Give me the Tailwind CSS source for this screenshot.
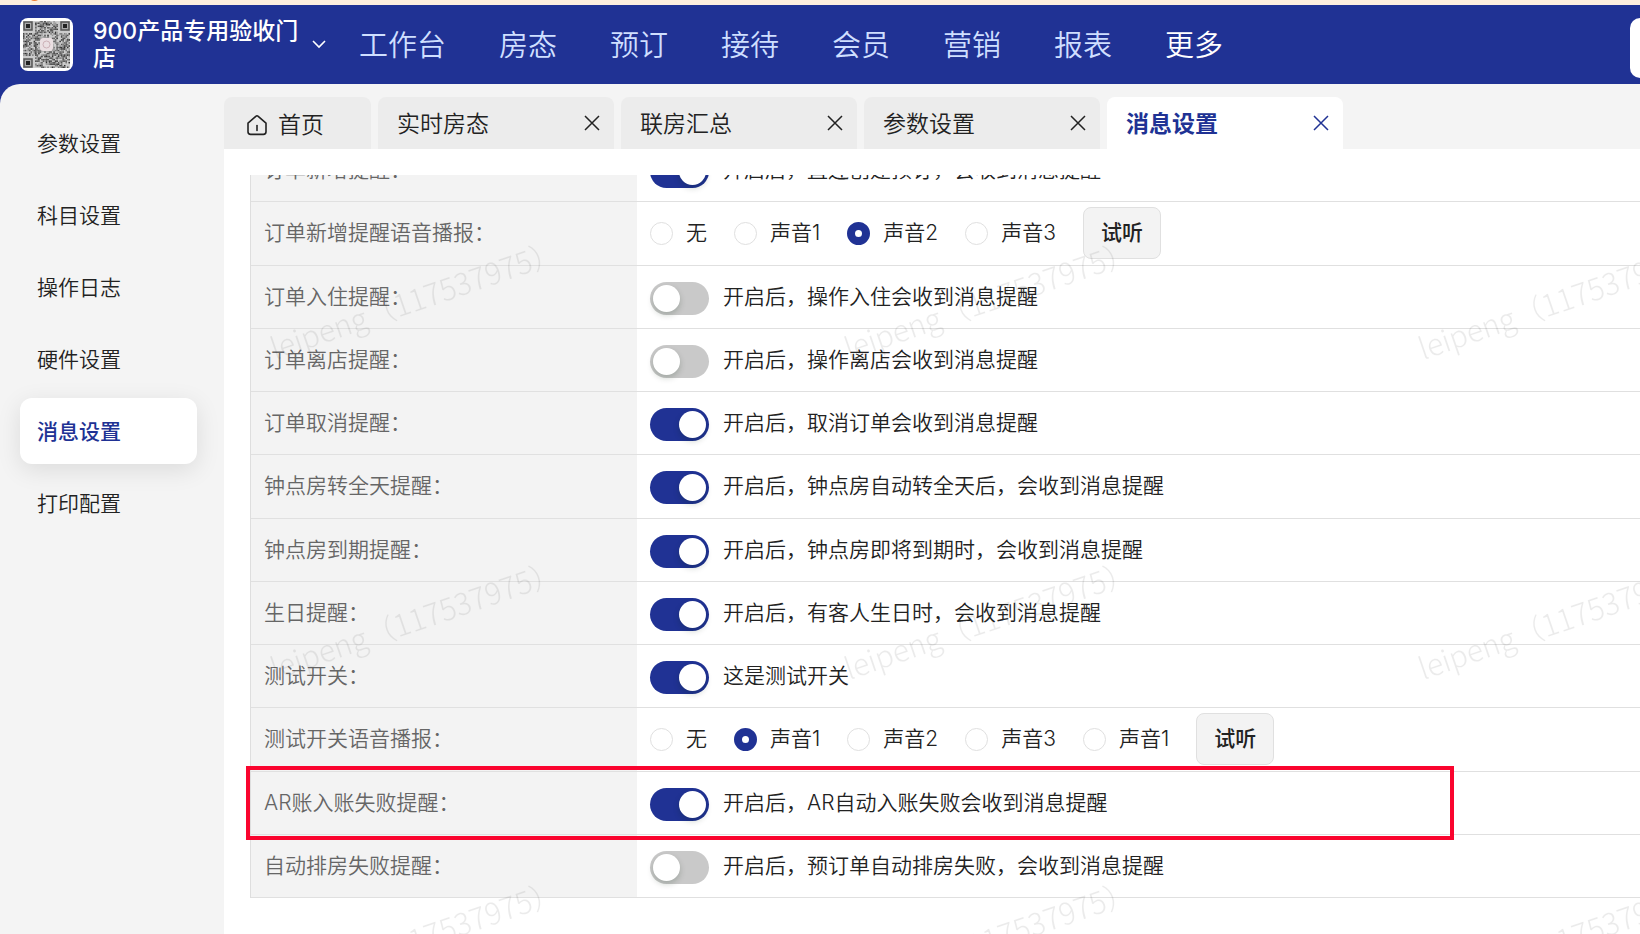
<!DOCTYPE html>
<html lang="zh-CN">
<head>
  <meta charset="UTF-8">
  <meta name="viewport" content="width=device-width, initial-scale=1.0">
  <title>消息设置</title>
  <script src="https://cdn.jsdelivr.net/npm/@tailwindcss/browser@4"></script>
</head>
<body class="flex h-screen flex-col overflow-hidden bg-[#203294] font-[Inter,'Noto_Sans_CJK_SC',sans-serif] text-[21px] leading-[30px] font-[350] text-[#222]">
  <div class="h-[5px] shrink-0 overflow-hidden bg-[#fdefdf] pl-7">
    <div class="-mt-3 h-[13px] w-[13px] rounded-full bg-[#ee7b30]"></div>
  </div>

  <header class="flex h-[79px] shrink-0 items-center pl-5">
    <svg id="qr" class="h-[53px] w-[53px] shrink-0 rounded-lg bg-white" viewBox="0 0 53 53" role="img" aria-label="门店二维码"></svg>
    <button class="ml-5 flex items-center text-left text-white">
      <span class="w-[210px] text-[23px] leading-[27px] font-medium">900产品专用验收门店</span>
      <svg class="ml-2 h-4 w-4" viewBox="0 0 16 16" fill="none" stroke="currentColor" stroke-width="1.6"><path d="M2 4l6 6 6-6"/></svg>
    </button>
    <nav class="ml-8 flex gap-[53px] pt-0.5 text-[29px] leading-10 whitespace-nowrap text-[#cfdfff]">
      <a href="#">工作台</a>
      <a href="#">房态</a>
      <a href="#">预订</a>
      <a href="#">接待</a>
      <a href="#">会员</a>
      <a href="#">营销</a>
      <a href="#">报表</a>
      <a href="#" class="text-white">更多</a>
    </nav>
    <div class="mt-1.5 ml-auto h-[60px] w-[10px] rounded-l-xl bg-white"></div>
  </header>

  <div class="flex min-h-0 flex-1 rounded-tl-[20px] bg-[#f4f4f4]">
    <aside class="w-[224px] shrink-0 px-5 pt-[26px]">
      <nav class="flex w-[177px] flex-col gap-1.5">
        <a href="#" class="flex h-[66px] items-center px-[17px] pt-0.5">参数设置</a>
        <a href="#" class="flex h-[66px] items-center px-[17px] pt-0.5">科目设置</a>
        <a href="#" class="flex h-[66px] items-center px-[17px] pt-0.5">操作日志</a>
        <a href="#" class="flex h-[66px] items-center px-[17px] pt-0.5">硬件设置</a>
        <a href="#" class="flex h-[66px] items-center rounded-xl bg-white px-[17px] pt-0.5 font-medium text-[#203294] shadow-[0_6px_24px_rgba(0,0,0,0.1)]">消息设置</a>
        <a href="#" class="flex h-[66px] items-center px-[17px] pt-0.5">打印配置</a>
      </nav>
    </aside>

    <div class="flex min-w-0 flex-1 flex-col pt-[13px]">
      <div id="tabs" class="flex h-[52px] shrink-0 gap-[7px] text-[23px]">
        <button class="flex w-[147px] items-center rounded-t-lg bg-[#ececec] px-[22px] pt-1">
          <svg class="mr-2.5 h-[22px] w-[22px]" viewBox="0 0 22 22" fill="none" stroke="currentColor" stroke-width="1.6" stroke-linejoin="round" stroke-linecap="round"><path d="M2 9.2 9.8 2.3a1.8 1.8 0 0 1 2.4 0L20 9.2v8.6a2.6 2.6 0 0 1-2.6 2.6H4.6A2.6 2.6 0 0 1 2 17.800z"/><path d="M11 11.500v5"/></svg>
          首页
        </button>
      </div>

      <main class="relative min-h-0 flex-1 overflow-hidden bg-white pt-[26px] pl-[26px]">
        <div class="h-full overflow-hidden">
          <table class="-mt-9 h-[759px] w-full border-separate border-spacing-0 border-l border-[#dedede]">
            <tbody id="rows"></tbody>
          </table>
        </div>

        <svg class="pointer-events-none absolute inset-0 h-full w-full" aria-hidden="true">
          <defs>
            <pattern id="mark" x="26" y="51" width="574" height="320" patternUnits="userSpaceOnUse">
              <text x="25" y="160" transform="rotate(-19 25 160)" class="fill-black/8 font-['Noto_Sans_CJK_SC',sans-serif] text-[30px] font-light">leipeng（117537975）</text>
            </pattern>
          </defs>
          <rect width="100%" height="100%" fill="url(#mark)"/>
        </svg>
        <div class="pointer-events-none absolute top-[617px] left-[22px] h-[74px] w-[1208px] border-4 border-[#fa042e]"></div>
      </main>
    </div>
  </div>

  <script>
    const tabs = ["实时房态", "联房汇总", "参数设置", "消息设置"];

    const rows = [
      { name: "订单新增提醒", on: true, desc: "开启后，直连创建预订，会收到消息提醒" },
      { name: "订单新增提醒语音播报", sounds: ["无", "声音1", "声音2", "声音3"], picked: 2 },
      { name: "订单入住提醒", on: false, desc: "开启后，操作入住会收到消息提醒" },
      { name: "订单离店提醒", on: false, desc: "开启后，操作离店会收到消息提醒" },
      { name: "订单取消提醒", on: true, desc: "开启后，取消订单会收到消息提醒" },
      { name: "钟点房转全天提醒", on: true, desc: "开启后，钟点房自动转全天后，会收到消息提醒" },
      { name: "钟点房到期提醒", on: true, desc: "开启后，钟点房即将到期时，会收到消息提醒" },
      { name: "生日提醒", on: true, desc: "开启后，有客人生日时，会收到消息提醒" },
      { name: "测试开关", on: true, desc: "这是测试开关" },
      { name: "测试开关语音播报", sounds: ["无", "声音1", "声音2", "声音3", "声音1"], picked: 1 },
      { name: "AR账入账失败提醒", on: true, desc: "开启后，AR自动入账失败会收到消息提醒" },
      { name: "自动排房失败提醒", on: false, desc: "开启后，预订单自动排房失败，会收到消息提醒" },
    ];

    tabs.forEach((tab, i) => {
      const active = i === tabs.length - 1;
      document.getElementById("tabs").insertAdjacentHTML("beforeend", `
        <div class="flex w-[236px] items-center justify-between rounded-t-lg pr-3.5 pl-[19px] ${active ? "bg-white font-bold text-[#203294]" : "bg-[#ececec]"}">
          <a href="#" class="pt-0.5">${tab}</a>
          <button aria-label="关闭${tab}">
            <svg class="h-4 w-4" viewBox="0 0 16 16" stroke="currentColor" stroke-width="1.500"><path d="M1 1l14 14M15 1L1 15"/></svg>
          </button>
        </div>`);
    });

    function switchCell(row) {
      return `
        <label class="flex items-center">
          <input type="checkbox" ${row.on ? "checked" : ""} class="mt-[3px] mr-3.5 h-[33px] w-[59px] shrink-0 appearance-none rounded-full bg-[#c9c9c9] p-[3px] before:block before:h-[27px] before:w-[27px] before:rounded-full before:bg-white before:shadow-[0_3px_6px_rgba(0,35,11,0.2)] checked:bg-[#203294] checked:before:ml-[26px]">
          ${row.desc}
        </label>`;
    }

    function soundCell(row, index) {
      const options = row.sounds.map((sound, i) => `
        <label class="mr-[27px] flex items-center">
          <input type="radio" name="sound-${index}" ${i === row.picked ? "checked" : ""} class="mr-[13px] h-[23px] w-[23px] appearance-none rounded-full border border-[#e0e0e0] bg-white checked:border-8 checked:border-[#203294]">
          ${sound}
        </label>`).join("");
      return `
        <div class="flex items-center">
          ${options}
          <button class="h-[52px] w-[78px] rounded-lg border border-[#e0e0e0] bg-[#f3f3f3] font-medium">试听</button>
        </div>`;
    }

    document.getElementById("rows").innerHTML = rows.map((row, i) => `
      <tr class="h-[63px]">
        <th scope="row" class="w-[386px] border-b border-[#e0e0e0] bg-[#f3f3f3] pl-[13px] text-left font-[350] text-[#666]">${row.name}：</th>
        <td class="border-b border-[#e0e0e0] pl-[13px] whitespace-nowrap">${row.sounds ? soundCell(row, i) : switchCell(row)}</td>
      </tr>`).join("");

    // store QR code: 31 modules inside a 3px quiet zone
    const n = 31, size = 47 / n;
    let seed = 7, svg = "";
    const shades = ["#333", "#555", "#777", "#999"];
    const inFinder = (x, y) => (x < 8 && y < 8) || (x > n - 9 && y < 8) || (x < 8 && y > n - 9);
    svg += `<rect x="3" y="3" width="47" height="47" fill="#ccc"/>`;
    for (let y = 0; y < n; y++) {
      for (let x = 0; x < n; x++) {
        seed = (seed * 16807) % 2147483647;
        if (seed % 100 < 60 && !inFinder(x, y)) {
          svg += `<rect x="${3 + x * size}" y="${3 + y * size}" width="${size}" height="${size}" fill="${shades[(seed >> 8) % 4]}"/>`;
        }
      }
    }
    [[3, 3], [40, 3], [3, 40]].forEach(([x, y]) => {
      svg += `<rect x="${x + 1}" y="${y + 1}" width="8" height="8" fill="#aaa" stroke="#555" stroke-width="1.5"/><rect x="${x + 3}" y="${y + 3}" width="4" height="4" fill="#222"/>`;
    });
    svg += `<rect x="20" y="20" width="13" height="13" rx="3" fill="#eadfe2"/><circle cx="26.5" cy="26.5" r="3.5" fill="none" stroke="#cdb2b8"/>`;
    document.getElementById("qr").innerHTML = svg;
  </script>
</body>
</html>
